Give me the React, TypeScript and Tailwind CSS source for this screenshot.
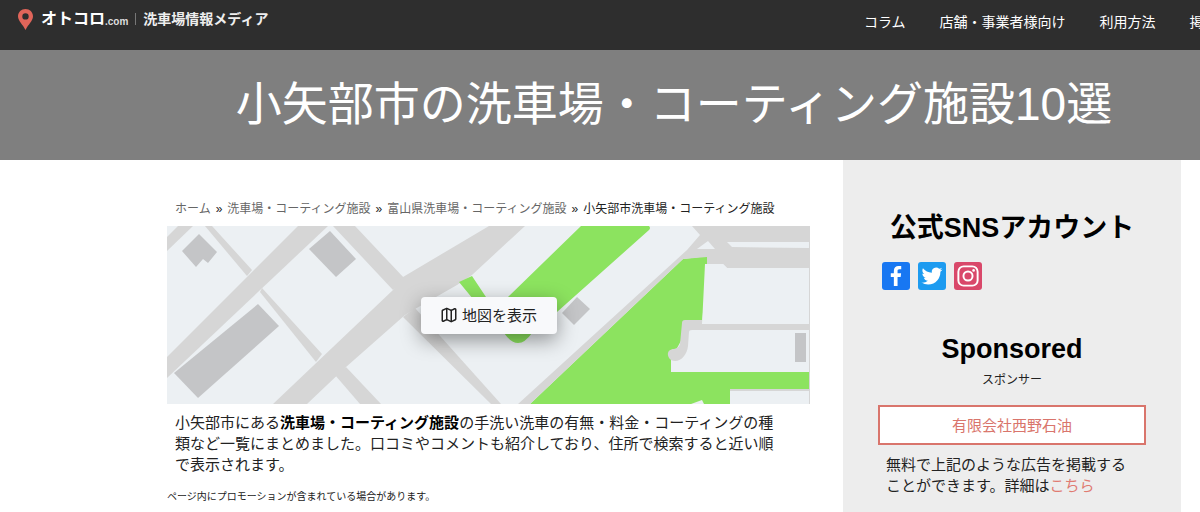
// Car wash listing page: header, title band, article column and sidebar.

import type { ReactNode } from 'react'
import { Map as MapIcon } from 'lucide-react'

const NAV_ITEMS = ['コラム', '店舗・事業者様向け', '利用方法', '掲載']

const CRUMBS = ['ホーム', '洗車場・コーティング施設', '富山県洗車場・コーティング施設']

export default function App() {
  return (
    <div className="flex min-h-screen flex-col overflow-x-hidden bg-white font-['Liberation_Sans','Noto_Sans_CJK_JP',sans-serif] text-[15px] leading-[21px] text-[#222]">
      <Header />
      <div className="bg-[#7f7f7f] pt-[22px] pb-6 pl-[167px] pr-[19px]">
        <h1 className="text-center text-[46px] leading-[64px] whitespace-nowrap text-white">
          小矢部市の洗車場・コーティング施設10選
        </h1>
      </div>
      <div className="flex flex-1 items-stretch gap-[33px] pl-[167px] pr-[19px]">
        <Article />
        <Sidebar />
      </div>
    </div>
  )
}

function Header() {
  return (
    <header className="flex h-[50px] bg-[#2e2e2e] text-white">
      <a href="#" className="flex h-[38px] flex-1 items-center pl-[18px] font-bold whitespace-nowrap">
        <svg viewBox="0 0 15 21" className="mr-2 h-[21px] w-[15px]" aria-hidden="true">
          <path
            fill="#e0655a"
            fillRule="evenodd"
            d="M7.5 0C3.3 0 0 3.2 0 7.2C0 12 4.8 15.2 7.5 21C10.2 15.2 15 12 15 7.2C15 3.2 11.7 0 7.5 0ZM7.5 4.2A3.2 3.2 0 1 1 7.5 10.6A3.2 3.2 0 1 1 7.5 4.2Z"
          />
        </svg>
        <span className="text-base">オトコロ</span>
        <span className="pt-1 text-[10px] text-[#ddd]">.com</span>
        <span className="mx-[7px] h-3 w-px bg-[#777]" />
        <span className="text-[14px] text-[#eee]">洗車場情報メディア</span>
      </a>
      <nav className="w-[28%] overflow-hidden">
        <ul className="flex h-11 items-center gap-[34px] text-[14px] whitespace-nowrap">
          {NAV_ITEMS.map((item) => (
            <li key={item} className="shrink-0">
              <a href="#">{item}</a>
            </li>
          ))}
        </ul>
      </nav>
    </header>
  )
}

function Article() {
  return (
    <main className="min-w-0 flex-1 pt-[39px]">
      <nav className="flex gap-[5px] px-2 text-xs leading-5 whitespace-nowrap">
        {CRUMBS.map((crumb) => (
          <span key={crumb} className="flex gap-[5px]">
            <a href="#" className="text-[#666]">
              {crumb}
            </a>
            <span>»</span>
          </span>
        ))}
        <span>小矢部市洗車場・コーティング施設</span>
      </nav>

      <div className="relative mt-[7px] h-[178px]">
        <MapArt />
        <div className="absolute inset-0 flex items-center justify-center">
          <button
            type="button"
            className="flex h-[37px] w-[136px] items-center justify-center gap-1 rounded bg-[#f8f9fb] text-[15px] text-[#222] shadow-[0_6px_20px_rgba(0,0,0,0.4)]"
          >
            <MapIcon className="h-[18px] w-[18px]" strokeWidth={2} />
            地図を表示
          </button>
        </div>
      </div>

      <p className="mt-2 px-2">
        小矢部市にある<strong className="text-black">洗車場・コーティング施設</strong>
        の手洗い洗車の有無・料金・コーティングの種
        <br />
        類など一覧にまとめました。口コミやコメントも紹介しており、住所で検索すると近い順
        <br />
        で表示されます。
      </p>
      <p className="mt-3.5 text-[10px] leading-4">ページ内にプロモーションが含まれている場合があります。</p>
    </main>
  )
}

function MapArt() {
  return (
    <svg viewBox="0 0 643 178" preserveAspectRatio="xMidYMid slice" className="block h-full w-full" aria-hidden="true">
      <rect width="643" height="178" fill="#ecf0f3" />

      <g fill="#d6d6d6">
        <path d="M0 11L11 0H26L0 25Z" />
        <path d="M38 0H45L85 44L80 50Z" />
        <path d="M131 0H161L0 152V131Z" />
        <path d="M93 66L95 62L155 128L149 136Z" />
        <path d="M166 0H188L238 53L226 64Z" />
        <path d="M106 178L226 64L236 51L322 0H358L305 49L290 59L248 83L238 89L179 141L140 178Z" />
        <path d="M168 149L179 141L214 178H193Z" />
        <path d="M236 91L248 82L334 178H324Z" />
      </g>

      <g fill="#8ce35f">
        <path d="M292 56L305 50L319 71L341 71L414 0H482Q484 2 482 4L390 86L365 107Q351 127 337 107L306 73Z" />
        <path d="M516 33L541 30L535 98V146H643V178H363Z" />
      </g>

      <g fill="#d6d6d6">
        <path d="M525 0H643V42H560L556 38H540V31L516 33L363 178H351L520 24L533 9Z" />
      </g>

      <g fill="#ecf0f3">
        <path d="M530 23L541 15L548 23Z" />
        <path d="M560 16H642V22L565 21Z" />
        <path d="M538 38H556L560 42H642V99H535Z" />
        <path d="M520 104H642V146H504V133Z" />
        <path d="M563 165H642V178H563Z" />
        <path d="M524 178L535 174L537 178Z" />
      </g>

      <g fill="#d6d6d6">
        <path d="M535 94H518Q515 94 515 97L513 118Q512 122 507 123C500 123 499 130 504 134C512 138 520 130 521 120L522 106Q522 104 525 104H643V98H535Z" />
        <path d="M563 163H643V165H563Z" />
        <path d="M642 0H643V178H642Z" />
      </g>

      <g fill="#c4c5c7">
        <path d="M32 8L50 26L41 37L36 33L29 41L15 25Z" />
        <path d="M163 5L189 33L169 51L142 23Z" />
        <path d="M91 78L112 100L31 172L7 147Z" />
        <path d="M410 71L423 83L407 99L395 87Z" />
        <path d="M628 107H639V136H628Z" />
      </g>
    </svg>
  )
}

function Sidebar() {
  return (
    <aside className="w-[338px] shrink-0 bg-[#ededed] px-[35px] pt-12 pb-3">
      <h2 className="text-center text-[27px] leading-10 font-bold text-black">公式SNSアカウント</h2>
      <div className="mt-3.5 flex gap-2 px-1">
        <SocialLink label="Facebook" className="bg-[#1877f2]">
          <path
            fill="#fff"
            d="M17.78 27.5V17.008h3.522l.527-4.09h-4.05v-2.61c0-1.182.33-1.99 2.023-1.99h2.166V4.66c-.375-.05-1.66-.16-3.155-.16-3.123 0-5.26 1.905-5.26 5.405v3.016h-3.53v4.09h3.53V27.5h4.223z"
          />
        </SocialLink>
        <SocialLink label="Twitter" className="bg-[#1d9bf0]">
          <path
            fill="#fff"
            d="M28 8.557a9.913 9.913 0 0 1-2.828.775 4.93 4.93 0 0 0 2.166-2.725 9.738 9.738 0 0 1-3.13 1.194 4.92 4.92 0 0 0-3.593-1.55 4.924 4.924 0 0 0-4.794 6.049c-4.09-.21-7.72-2.17-10.15-5.15a4.942 4.942 0 0 0-.665 2.477c0 1.71.87 3.214 2.19 4.1a4.968 4.968 0 0 1-2.23-.616v.06c0 2.39 1.7 4.38 3.952 4.83-.414.115-.85.174-1.297.174-.318 0-.626-.03-.928-.086a4.935 4.935 0 0 0 4.6 3.42 9.893 9.893 0 0 1-6.114 2.107c-.398 0-.79-.023-1.175-.068a13.953 13.953 0 0 0 7.55 2.213c9.056 0 14.01-7.507 14.01-14.013 0-.213-.005-.426-.015-.637.96-.695 1.795-1.56 2.455-2.55z"
          />
        </SocialLink>
        <SocialLink label="Instagram" className="bg-[#d9486a]">
          <g fill="none" stroke="#fff" strokeWidth="2.2">
            <rect x="5" y="5" width="22" height="22" rx="6" />
            <circle cx="16" cy="16" r="5.2" />
          </g>
          <circle cx="22.4" cy="9.6" r="1.5" fill="#fff" />
        </SocialLink>
      </div>

      <h2 className="mt-[39px] text-center text-[27px] leading-10 font-bold text-black">Sponsored</h2>
      <p className="text-center text-xs leading-[22px]">スポンサー</p>
      <a
        href="#"
        className="mt-3.5 flex h-10 items-center justify-center border-2 border-[#d9756c] bg-white text-[#d9756c]"
      >
        有限会社西野石油
      </a>
      <p className="mt-[9px] px-2">
        無料で上記のような広告を掲載する
        <br />
        ことができます。詳細は
        <a href="#" className="text-[#e07b72]">
          こちら
        </a>
      </p>
    </aside>
  )
}

function SocialLink({ label, className, children }: { label: string; className: string; children: ReactNode }) {
  return (
    <a href="#" aria-label={label} className={`block h-7 w-7 rounded-[3px] ${className}`}>
      <svg viewBox="0 0 32 32" className="h-full w-full">
        {children}
      </svg>
    </a>
  )
}
